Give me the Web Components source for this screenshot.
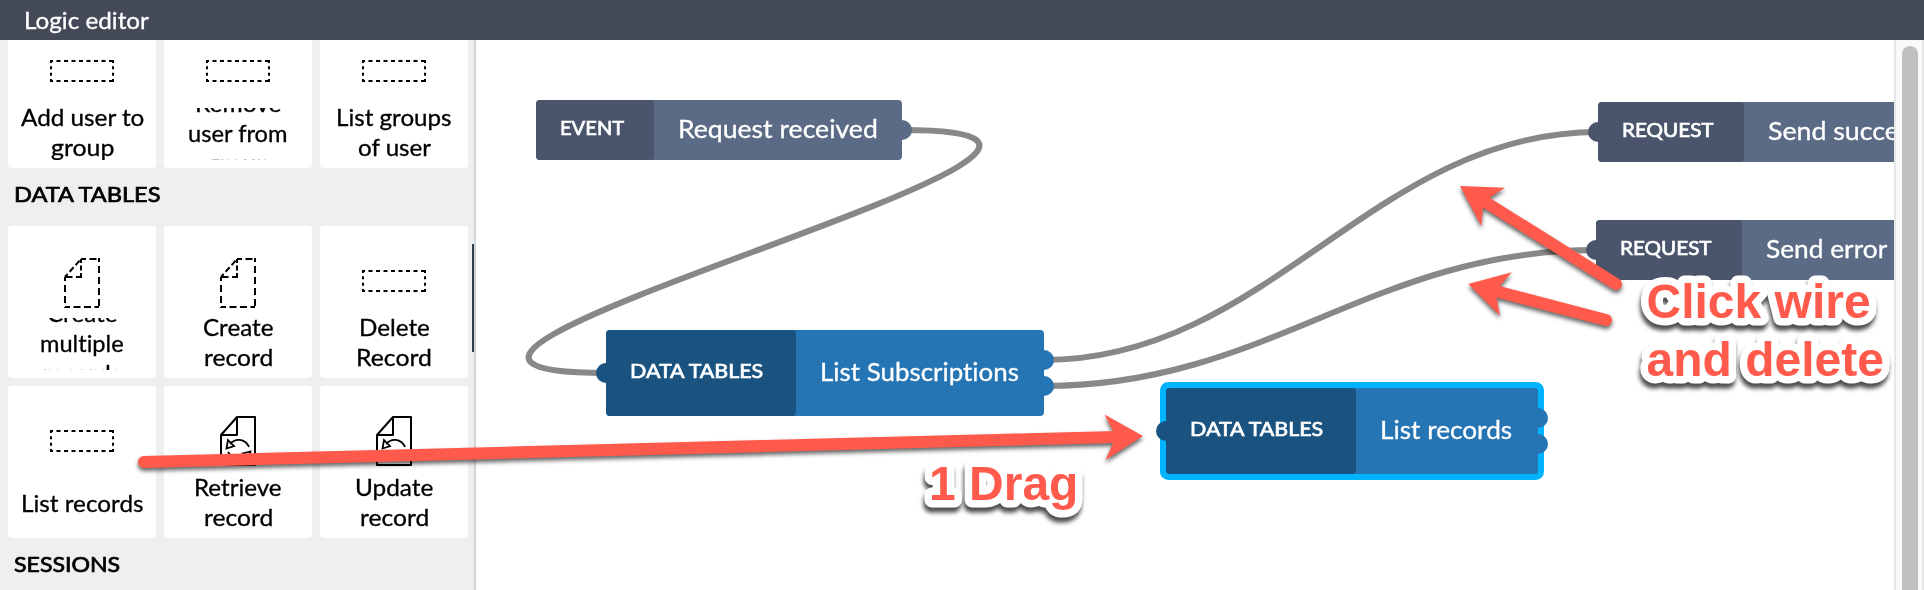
<!DOCTYPE html>
<html lang="en">
<head>
<meta charset="utf-8">
<title>Logic editor</title>
<style>
html,body{margin:0;height:100%;overflow:hidden;background:#fff}
body{font-family:Lato,"Open Sans",sans-serif;font-variant-ligatures:none;color:#000}
</style>
</head>
<body>
<logic-editor></logic-editor>
<script>
const define = (name, html, ready) => customElements.define(name, class extends HTMLElement {
  connectedCallback() {
    if (this.shadowRoot) return;
    const t = document.createElement('template');
    t.innerHTML = typeof html === 'function' ? html(this) : html;
    this.attachShadow({ mode: 'open' }).append(t.content.cloneNode(true));
    if (ready) ready(this);
  }
});

// A single line of text whose letters are widened to a given width (w).
define('fit-line', el => `<style>:host{display:block;white-space:nowrap;width:${el.getAttribute('w')}px;-webkit-text-stroke:.3px currentColor}span{display:inline-block;transform-origin:0 50%}</style><span><slot></slot></span>`, el => {
  const span = el.shadowRoot.querySelector('span');
  span.style.transform = `scaleX(${(el.getAttribute('w') / span.offsetWidth).toFixed(4)})`;
});

define('app-header', `<style>
:host{display:flex;align-items:center;box-sizing:border-box;height:40px;padding:1px 0 0 24px;background:#434956;color:#fff;font-size:22.5px;line-height:40px}
</style><slot></slot>`);

const icons = {
  dotted: `<svg width="64" height="22" viewBox="0 0 64 22"><path d="M0 1H64M0 21H64" stroke-dasharray="4 3.5" stroke-dashoffset="1"/><path d="M1 0V22M63 0V22" stroke-dasharray="3 3.33" stroke-dashoffset="0"/></svg>`,
  draft: `<svg width="36" height="50" viewBox="0 0 36 50"><path d="M17 1H35M17 19H1M1 49H35" stroke-dasharray="7 3.5" stroke-dashoffset="2"/><path d="M35 0V50M1 19V50" stroke-dasharray="7 4" stroke-dashoffset="3"/><path d="M17 1V20" stroke-dasharray="5 2.500" stroke-dashoffset="1"/><path d="M1 19L17 1" stroke-dasharray="6 3" stroke-dashoffset="2"/></svg>`,
  refresh: `<svg width="36" height="50" viewBox="0 0 36 50"><path d="M17 1H35V49H1V19Z M17 1V19H1" stroke-linejoin="round"/><path d="M10 28C15 22 25 22 29 31M8 24L6.500 32.500L14 30Z M26 37.500C21 44 12 43 8 36M29 42L30.500 35.500L23 37.500Z" stroke-width="1.800"/></svg>`
};
define('block-card', el => `<style>
:host{display:flex;flex-direction:column;width:148px;height:152px;background:#fff;border-radius:4px;overflow:hidden}
.icon{height:${el.getAttribute('icon') === 'draft' ? 114 : 110}px;flex:none;display:flex;align-items:center;justify-content:center;margin-bottom:${el.getAttribute('icon') === 'draft' ? -22 : -18}px}
svg{fill:none;stroke:#000;stroke-width:2}
.label{height:52px;box-sizing:border-box;padding-bottom:${el.children.length === 2 ? 2 : 0}px;flex:none;overflow:hidden;display:flex;flex-direction:column;justify-content:center;align-items:center;font-size:22.5px;line-height:30px}
::slotted(*){flex:none}
</style><div class="icon">${icons[el.getAttribute('icon')]}</div><div class="label"><slot></slot></div>`);

define('block-section', el => `<style>
:host{display:block}
h2{margin:0;height:58px;box-sizing:border-box;padding:0 0 6px 14px;display:flex;align-items:center;font-size:20.5px;font-weight:400}
h2 fit-line{-webkit-text-stroke:.7px #000}
.grid{display:grid;grid-template-columns:repeat(3,148px);gap:8px;padding-left:8px}
</style>${el.hasAttribute('w') ? `<h2><fit-line w="${el.getAttribute('w')}">${el.getAttribute('heading')}</fit-line></h2>` : ''}<div class="grid"><slot></slot></div>`);

define('block-palette', `<style>
:host{display:grid;grid-template-columns:472px 2px;width:474px;flex:none;background:#eeeff1;border-right:2px solid #d3d4d8;overflow:hidden}
.list{margin-top:-24px}
.thumb{height:108px;margin-top:204px;background:#2e3f50}
</style>
<div class="list">
<block-section>
<block-card icon="dotted"><fit-line w="123">Add user to</fit-line><fit-line w="63">group</fit-line></block-card>
<block-card icon="dotted"><fit-line w="86">Remove</fit-line><fit-line w="100">user from</fit-line><fit-line w="63">group</fit-line></block-card>
<block-card icon="dotted"><fit-line w="116">List groups</fit-line><fit-line w="73">of user</fit-line></block-card>
</block-section>
<block-section heading="DATA TABLES" w="146">
<block-card icon="draft"><fit-line w="71">Create</fit-line><fit-line w="84">multiple</fit-line><fit-line w="78">records</fit-line></block-card>
<block-card icon="draft"><fit-line w="71">Create</fit-line><fit-line w="69">record</fit-line></block-card>
<block-card icon="dotted"><fit-line w="71">Delete</fit-line><fit-line w="76">Record</fit-line></block-card>
<block-card icon="dotted"><fit-line w="123">List records</fit-line></block-card>
<block-card icon="refresh"><fit-line w="88">Retrieve</fit-line><fit-line w="69">record</fit-line></block-card>
<block-card icon="refresh"><fit-line w="78">Update</fit-line><fit-line w="69">record</fit-line></block-card>
</block-section>
<block-section heading="SESSIONS" w="106"></block-section>
</div><div class="thumb"></div>`);

// Diagram node: x, y, w, h, split (width of the type part), in/out port offsets.
define('flow-node', el => {
  const a = k => el.getAttribute(k), ports = k => (a(k) || '').split(' ').filter(Boolean);
  return `<style>
:host{position:absolute;left:${a('x')}px;top:${a('y')}px;width:${a('w')}px;height:${a('h')}px;--dark:#4a556b;--light:#5b6a85;color:#fff}
:host([kind=data]){--dark:#1a5380;--light:#2574b4}
.box{position:relative;display:flex;height:100%;border-radius:4px;background:var(--light)}
:host([selected]) .box{box-shadow:0 0 0 6px #00b4ff;border-radius:3px}
.type,.name{display:flex;align-items:center;box-sizing:border-box;padding:0 0 4px 24px}
.type{width:${a('split')}px;flex:none;background:var(--dark);border-radius:4px;font-size:19.5px;padding-bottom:5px}
.type fit-line{-webkit-text-stroke:.7px #fff}
.name{font-size:25px}
.port{position:absolute;width:20px;height:20px;border-radius:50%}
</style><div class="box">
${ports('in').map(p => `<i class="port" style="left:-10px;top:${p - 10}px;background:var(--dark)"></i>`).join('')}
${ports('out').map(p => `<i class="port" style="right:-10px;top:${p - 10}px;background:var(--light)"></i>`).join('')}
<div class="type"><fit-line w="${a('tw')}">${a('type')}</fit-line></div><div class="name"><fit-line w="${a('nw')}">${a('name')}</fit-line></div></div>`;
});

define('flow-canvas', `<style>
:host{display:block;position:relative;flex:1;min-width:0;overflow:hidden;background:#fff}
svg{position:absolute;left:0;top:0}
</style>
<svg width="1418" height="550" viewBox="476 40 1418 550" fill="none" stroke="#888" stroke-width="6">
<path d="M902 130C1258 130 250 373 606 373"/><path d="M1044 360C1268 360 1374 132 1598 132"/><path d="M1044 386C1268 386 1372 250 1596 250"/></svg>
<flow-node x="60" y="60" w="366" h="60" split="118" out="30" type="EVENT" tw="64" name="Request received" nw="200"></flow-node>
<flow-node kind="data" x="130" y="290" w="438" h="86" split="190" in="43" out="30 56" type="DATA TABLES" tw="133" name="List Subscriptions" nw="199"></flow-node>
<flow-node kind="data" selected x="690" y="348" w="372" h="86" split="190" in="43" out="30 56" type="DATA TABLES" tw="133" name="List records" nw="132"></flow-node>
<flow-node x="1122" y="62" w="366" h="60" split="146" in="30" type="REQUEST" tw="91" name="Send success" nw="154"></flow-node>
<flow-node x="1120" y="180" w="366" h="60" split="146" in="30" type="REQUEST" tw="91" name="Send error" nw="121"></flow-node>`);

define('scroll-rail', `<style>
:host{display:block;box-sizing:border-box;width:30px;flex:none;border:solid #e7e7e7;border-width:0 2px;background:#fafafa;padding:6px 4px 0 6px;overflow:hidden}
div{height:600px;border-radius:8px;background:#c1c1c1}
</style><div></div>`);

define('guide-notes', `<style>
:host{position:absolute;inset:0;pointer-events:none}
svg{display:block}
.arrow{fill:#ff5a4c;filter:drop-shadow(0 3px 2px rgba(0,0,0,.6))}
.arrow line{stroke:#ff5a4c;stroke-width:12;stroke-linecap:round}
text{font:bold 48px "Liberation Sans",Arial,sans-serif;fill:#ff5a4c;stroke:#fff;stroke-width:15px;stroke-linejoin:round;paint-order:stroke}
.note{filter:drop-shadow(-1px 5px 2px rgba(0,0,0,.7))}
</style>
<svg width="1924" height="590" viewBox="0 0 1924 590">
<g class="arrow"><line x1="144" y1="462" x2="1116" y2="437"/><path d="M1143 436L1104.500 414.500L1113 431V443L1105.500 460Z"/></g>
<g class="arrow"><line x1="1616" y1="284" x2="1486" y2="202.500"/><path d="M1460 186L1505 187.700L1490 197.300L1483 208.300L1481.300 226Z"/></g>
<g class="arrow"><line x1="1606" y1="320" x2="1499" y2="292"/><path d="M1468.300 284L1511.700 272.300L1500 285.700L1496.700 298.300L1500 315.700Z"/></g>
<g class="note"><text x="1646.500" y="318">Click wire</text><text x="1646.500" y="376">and delete</text></g>
<g class="note"><text x="929" y="500">1 Drag</text></g>
</svg>`);

define('logic-editor', `<style>
:host{display:flex;flex-direction:column;position:relative;height:590px;overflow:hidden}
main{display:flex;flex:1;min-height:0}
</style><app-header><fit-line w="125">Logic editor</fit-line></app-header>
<main><block-palette></block-palette><flow-canvas></flow-canvas><scroll-rail></scroll-rail></main>
<guide-notes></guide-notes>`);
</script>
</body>
</html>
